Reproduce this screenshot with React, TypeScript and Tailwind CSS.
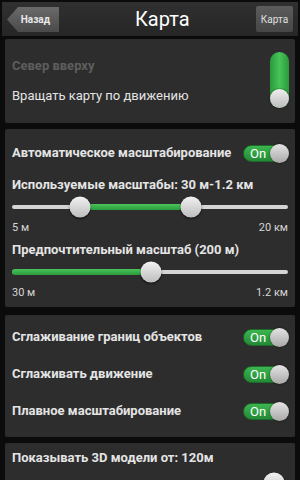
import React from "react";

const font = { fontFamily: "Roboto, 'Liberation Sans', sans-serif" };

const OnToggle: React.FC = () => (
  <div className="relative h-[19px] w-[46px] shrink-0">
    <div className="absolute left-0 top-[1px] flex h-[17px] w-[40px] items-center rounded-full border border-[#1d6b2a] bg-gradient-to-b from-[#3cb650] to-[#238a35] pl-[6px] text-[13px] leading-none text-white">
      On
    </div>
    <div className="absolute right-0 top-0 h-[19px] w-[19px] rounded-full bg-gradient-to-b from-[#e4e4e4] to-[#a9a9a9] shadow-[0_0_2px_rgba(0,0,0,0.7)]" />
  </div>
);

const Knob: React.FC<{ left: number }> = ({ left }) => (
  <div
    className="absolute top-1/2 h-[21px] w-[21px] -translate-x-1/2 -translate-y-1/2 rounded-full bg-gradient-to-b from-[#f2f2f2] to-[#bdbdbd] shadow-[0_1px_2px_rgba(0,0,0,0.8)]"
    style={{ left: `${left}%` }}
  />
);

interface SliderProps {
  from: number;
  to: number;
  knobs: number[];
}

const Slider: React.FC<SliderProps> = ({ from, to, knobs }) => (
  <div className="relative mx-[7px] h-[24px]">
    <div className="absolute left-0 right-0 top-1/2 h-[4px] -translate-y-1/2 rounded-full bg-[#d4d4d4]" />
    <div
      className="absolute top-1/2 h-[6px] -translate-y-1/2 rounded-full bg-gradient-to-b from-[#49c45a] to-[#2a9c3c]"
      style={{ left: `${from}%`, width: `${to - from}%` }}
    />
    {knobs.map((k) => (
      <Knob key={k} left={k} />
    ))}
  </div>
);

const Row: React.FC<{ label: string; children?: React.ReactNode; className?: string }> = ({
  label,
  children,
  className,
}) => (
  <div className={`flex h-[20px] items-center justify-between pl-[7px] pr-[6px] ${className ?? ""}`}>
    <span className="text-[13px] font-bold text-[#e4e4e4]">{label}</span>
    {children}
  </div>
);

const Panel: React.FC<{ children: React.ReactNode; className?: string }> = ({ children, className }) => (
  <div className={`mx-[5px] rounded-[2px] bg-[#2d2d2d] ${className ?? ""}`}>{children}</div>
);

export default function App() {
  return (
    <div className="h-[480px] w-[300px] overflow-hidden bg-[#0b0b0b] pt-[2px]" style={font}>
      {/* header */}
      <div className="relative mx-[2px] flex h-[34px] items-center justify-between bg-gradient-to-b from-[#303030] to-[#262626] px-[5px]">
        <div className="relative flex h-[25px] w-[52px] items-center justify-end pr-[9px]">
          <svg className="absolute inset-0" width="52" height="25" viewBox="0 0 52 25">
            <defs>
              <linearGradient id="bk" x1="0" y1="0" x2="0" y2="1">
                <stop offset="0" stopColor="#6a6a6a" />
                <stop offset="1" stopColor="#4a4a4a" />
              </linearGradient>
            </defs>
            <path d="M0 12.5 L11 0 H52 V25 H11 Z" fill="url(#bk)" />
          </svg>
          <span className="relative text-[10px] font-bold text-[#e8e8e8]">Назад</span>
        </div>
        <span className="absolute left-[133px] top-[5px] text-[20px] leading-[24px] text-white">Карта</span>
        <div className="flex h-[26px] w-[37px] items-center justify-center rounded-[2px] bg-gradient-to-b from-[#5c5c5c] to-[#464646] text-[10px] text-[#e0e0e0]">
          Карта
        </div>
      </div>

      {/* panel 1 */}
      <Panel className="mt-[3px] flex h-[84px] items-center justify-between pl-[7px] pr-[6px]">
        <div className="flex flex-col">
          <span className="text-[13px] font-bold leading-[20px] text-[#5e5e5e]">Север вверху</span>
          <span className="mt-[10px] text-[13px] leading-[20px] text-[#e4e4e4]">Вращать карту по движению</span>
        </div>
        <div className="relative mt-[13px] h-[56px] w-[19px] self-start rounded-full bg-gradient-to-r from-[#2a9a3b] via-[#47c459] to-[#2a9a3b]">
          <div className="absolute bottom-0 left-0 h-[19px] w-[19px] rounded-full bg-gradient-to-b from-[#f0f0f0] to-[#bcbcbc] shadow-[0_0_2px_rgba(0,0,0,0.7)]" />
        </div>
      </Panel>

      {/* panel 2 */}
      <Panel className="mt-[6px] h-[178px] pt-[14px]">
        <Row label="Автоматическое масштабирование">
          <OnToggle />
        </Row>
        <Row label="Используемые масштабы: 30 м-1.2 км" className="mt-[12px]" />
        <Slider from={24.5} to={65} knobs={[24.5, 65]} />
        <div className="flex h-[18px] items-center justify-between px-[7px] text-[11px] text-[#d6d6d6]">
          <span>5 м</span>
          <span>20 км</span>
        </div>
        <Row label="Предпочтительный масштаб (200 м)" className="mt-[3px]" />
        <Slider from={0} to={50.5} knobs={[50.5]} />
        <div className="flex h-[18px] items-center justify-between px-[7px] text-[11px] text-[#d6d6d6]">
          <span>30 м</span>
          <span>1.2 км</span>
        </div>
      </Panel>

      {/* panel 3 */}
      <Panel className="mt-[8px] flex h-[122px] flex-col gap-[17px] pt-[12px]">
        <Row label="Сглаживание границ объектов">
          <OnToggle />
        </Row>
        <Row label="Сглаживать движение">
          <OnToggle />
        </Row>
        <Row label="Плавное масштабирование">
          <OnToggle />
        </Row>
      </Panel>

      {/* panel 4 */}
      <Panel className="mt-[6px] h-[60px] pt-[5px]">
        <Row label="Показывать 3D модели от: 120м" />
        <div className="mt-[3px]">
          <Slider from={0} to={95} knobs={[95]} />
        </div>
      </Panel>
    </div>
  );
}
